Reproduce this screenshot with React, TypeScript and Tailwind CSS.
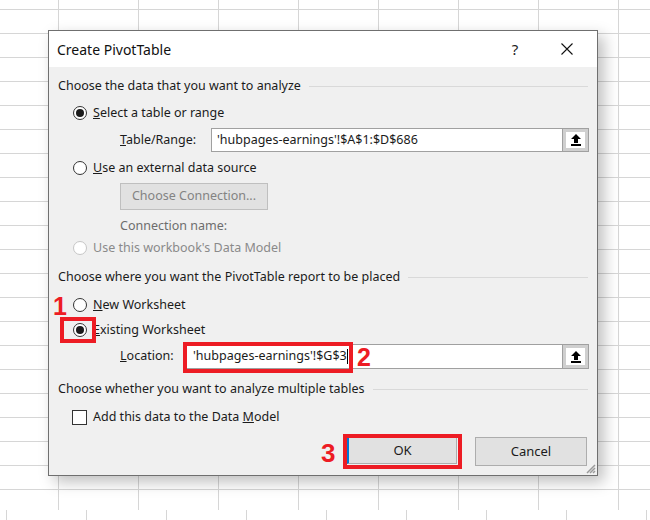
import React from "react";

const Radio = ({ checked, disabled }: { checked?: boolean; disabled?: boolean }) => (
  <span
    className={`flex items-center justify-center w-[14px] h-[14px] rounded-full border bg-white ${
      disabled ? "border-[#c6c6c6]" : "border-[#333333]"
    }`}
  >
    {checked && <span className="w-[8px] h-[8px] rounded-full bg-[#1a1a1a]" />}
  </span>
);

const Heading = ({ text }: { text: string }) => (
  <div className="flex items-center h-[20px] pl-[9px] pr-[9px] gap-[8px]">
    <span className="whitespace-nowrap">{text}</span>
    <span className="flex-1 h-px bg-[#d9d9d9]" />
  </div>
);

const UploadIcon = () => (
  <svg width="12" height="14" viewBox="0 0 12 14">
    <path d="M6 1 L11 6 L8 6 L8 10 L4 10 L4 6 L1 6 Z" fill="#000" />
    <rect x="1" y="11" width="10" height="2" fill="#000" />
  </svg>
);

const RefButton = () => (
  <div className="flex items-center justify-center w-[26px] h-full border-l border-[#a0a0a0] bg-[#cfcfcf] p-[3px]">
    <div className="flex items-center justify-center w-full h-full bg-white">
      <UploadIcon />
    </div>
  </div>
);

const Annot = ({ children, className }: { children: React.ReactNode; className: string }) => (
  <span
    className={`absolute font-bold text-[#ed1c24] leading-none ${className}`}
    style={{ fontFamily: "'Liberation Sans', Arial, sans-serif" }}
  >
    {children}
  </span>
);

export default function App() {
  return (
    <div
      className="w-[650px] h-[520px] flex flex-col bg-white overflow-hidden text-[12.5px] text-[#1b1b1b]"
      style={{ fontFamily: "'Noto Sans', 'Open Sans', sans-serif" }}
    >
      <div className="h-[510px] pt-[30px] pl-[48px] [background-image:linear-gradient(to_right,#d6d6d6_1px,transparent_1px),linear-gradient(to_bottom,#d6d6d6_1px,transparent_1px)] [background-size:80px_24px] [background-position:58px_9px]">
        <div className="relative w-[550px] h-[446px] flex flex-col border border-[#6f6f6f] bg-[#f0f0f0] shadow-[6px_6px_14px_rgba(0,0,0,0.25)]">
          {/* title bar */}
          <div className="flex items-center h-[36px] bg-white pl-[8px]">
            <span className="flex-1 text-[14px] text-[#111]">Create PivotTable</span>
            <span className="w-[20px] text-center text-[15px] text-[#222] mr-[36px]">?</span>
            <svg width="12" height="12" viewBox="0 0 12 12" className="mr-[24px]">
              <path d="M0.5 0.5 L11.5 11.5 M11.5 0.5 L0.5 11.5" stroke="#111" strokeWidth="1.1" />
            </svg>
          </div>

          <div className="mt-[9px]">
            <Heading text="Choose the data that you want to analyze" />
          </div>

          <div className="flex items-center h-[20px] mt-[7px] pl-[24px] gap-[6px]">
            <Radio checked />
            <span>
              <span className="underline">S</span>elect a table or range
            </span>
          </div>

          <div className="flex items-center h-[24px] mt-[5px] pl-[71px]">
            <span className="w-[91px]">
              <span className="underline">T</span>able/Range:
            </span>
            <div className="flex items-stretch w-[378px] h-full border border-[#a0a0a0] bg-white">
              <span className="flex-1 flex items-center pl-[5px]">'hubpages-earnings'!$A$1:$D$686</span>
              <RefButton />
            </div>
          </div>

          <div className="flex items-center h-[20px] mt-[6px] pl-[24px] gap-[6px]">
            <Radio />
            <span>
              <span className="underline">U</span>se an external data source
            </span>
          </div>

          <div className="flex mt-[5px] pl-[71px]">
            <div className="flex items-center justify-center w-[148px] h-[27px] border border-[#bfbfbf] bg-[#e1e1e1] text-[#838383]">
              Choose Connection...
            </div>
          </div>

          <div className="flex items-center h-[20px] mt-[6px] pl-[71px] text-[#6d6d6d]">Connection name:</div>

          <div className="flex items-center h-[20px] mt-[2px] pl-[24px] gap-[6px] text-[#8a8a8a]">
            <Radio disabled />
            <span>Use this workbook's Data Model</span>
          </div>

          <div className="mt-[9px]">
            <Heading text="Choose where you want the PivotTable report to be placed" />
          </div>

          <div className="flex items-center h-[20px] mt-[8px] pl-[24px] gap-[6px]">
            <Radio />
            <span>
              <span className="underline">N</span>ew Worksheet
            </span>
          </div>

          <div className="flex items-center h-[20px] mt-[5px] pl-[24px] gap-[6px]">
            <Radio checked />
            <span>
              <span className="underline">E</span>xisting Worksheet
            </span>
          </div>

          <div className="flex items-center h-[25px] mt-[4px] pl-[71px]">
            <span className="w-[66px]">
              <span className="underline">L</span>ocation:
            </span>
            <div className="flex items-stretch w-[403px] h-full border border-[#a0a0a0] bg-white">
              <span className="flex-1 flex items-center pl-[6px]">
                'hubpages-earnings'!$G$3
                <span className="w-px h-[15px] bg-black" />
              </span>
              <RefButton />
            </div>
          </div>

          <div className="mt-[10px]">
            <Heading text="Choose whether you want to analyze multiple tables" />
          </div>

          <div className="flex items-center h-[20px] mt-[8px] pl-[23px] gap-[6px]">
            <span className="w-[15px] h-[15px] border border-[#333] bg-white" />
            <span>
              Add this data to the Data <span className="underline">M</span>odel
            </span>
          </div>

          <div className="flex justify-end gap-[18px] mt-[10px] pr-[10px]">
            <div className="flex items-center justify-center w-[110px] h-[27px] border border-[#adadad] border-l-[2px] border-l-[#0078d7] bg-[#e1e1e1] text-[13px]">
              OK
            </div>
            <div className="flex items-center justify-center w-[112px] h-[29px] border border-[#adadad] bg-[#e1e1e1] text-[13px]">
              Cancel
            </div>
          </div>

          {/* resize grip */}
          <svg width="12" height="12" viewBox="0 0 12 12" className="absolute right-[1px] bottom-[1px]">
            <path d="M11 3 L3 11 M11 6 L6 11 M11 9 L9 11" stroke="#9a9a9a" strokeWidth="1.5" />
          </svg>

          {/* annotations */}
          <Annot className="left-[4px] top-[263px] text-[25px]">1</Annot>
          <span className="absolute left-[11px] top-[286px] w-[36px] h-[26px] border-[4px] border-[#ed1c24]" />
          <span className="absolute left-[134px] top-[311px] w-[170px] h-[31px] border-[4px] border-[#ed1c24]" />
          <Annot className="left-[308px] top-[314px] text-[25px]">2</Annot>
          <span className="absolute left-[294px] top-[403px] w-[119px] h-[35px] border-[4px] border-[#ed1c24]" />
          <Annot className="left-[272px] top-[409px] text-[26px]">3</Annot>
        </div>
      </div>
      <div className="h-[10px] [background-image:linear-gradient(to_right,#d6d6d6_1px,transparent_1px)] [background-size:80px_10px] [background-position:6px_0px]" />
    </div>
  );
}
